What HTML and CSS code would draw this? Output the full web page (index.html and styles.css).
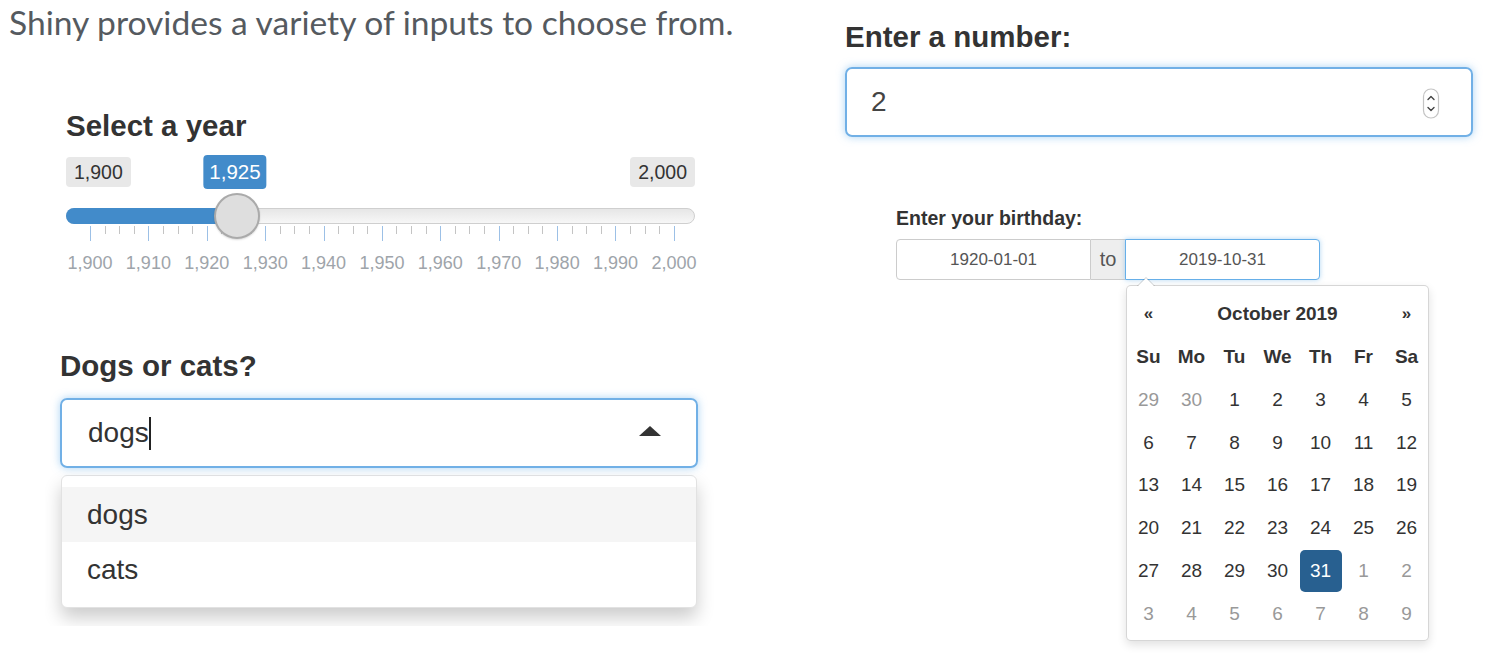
FILE: index.html
```html
<!DOCTYPE html>
<html lang="en">
<head>
<meta charset="utf-8">
<title>Shiny inputs</title>
<link rel="stylesheet" href="styles.css">
</head>
<body>
<div class="page">
  <div class="left">
    <p class="intro">Shiny provides a variety of inputs to choose from.</p>

    <div class="slider-group">
      <div class="ctl-label">Select a year</div>
      <div class="slider">
        <div class="slider-labels">
          <span class="lbl-minmax">1,900</span>
          <span class="lbl-single" style="left: 169px">1,925</span>
          <span class="lbl-minmax">2,000</span>
        </div>
        <div class="track">
          <div class="track-fill" style="width: 170px"></div>
          <div class="handle" style="left: 147px"></div>
        </div>
        <div class="ticks">
          <i class="major"></i><i></i><i></i><i></i>
          <i class="major"></i><i></i><i></i><i></i>
          <i class="major"></i><i></i><i></i><i></i>
          <i class="major"></i><i></i><i></i><i></i>
          <i class="major"></i><i></i><i></i><i></i>
          <i class="major"></i><i></i><i></i><i></i>
          <i class="major"></i><i></i><i></i><i></i>
          <i class="major"></i><i></i><i></i><i></i>
          <i class="major"></i><i></i><i></i><i></i>
          <i class="major"></i><i></i><i></i><i></i>
          <i class="major"></i>
        </div>
        <div class="grid-labels">
          <span>1,900</span><span>1,910</span><span>1,920</span><span>1,930</span>
          <span>1,940</span><span>1,950</span><span>1,960</span><span>1,970</span>
          <span>1,980</span><span>1,990</span><span>2,000</span>
        </div>
      </div>
    </div>

    <div class="select-clip">
      <div class="ctl-label">Dogs or cats?</div>
      <div class="select-box">
        <span class="select-text">dogs</span><span class="caret"></span>
        <span class="select-arrow"></span>
      </div>
      <div class="select-menu">
        <div class="option active">dogs</div>
        <div class="option">cats</div>
      </div>
    </div>
  </div>

  <div class="right">
    <div class="ctl-label">Enter a number:</div>
    <div class="num-box">
      <span class="num-text">2</span>
      <svg class="spinner" width="18" height="31" viewBox="0 0 18 31">
        <rect x="1.5" y="1" width="15" height="29" rx="7.5" fill="#fff" stroke="#c4c4c4" stroke-width="1.2"/>
        <path d="M6 11.5 L9 8.5 L12 11.5" fill="none" stroke="#444" stroke-width="1.4" stroke-linecap="round" stroke-linejoin="round"/>
        <path d="M6 19.5 L9 22.5 L12 19.5" fill="none" stroke="#444" stroke-width="1.4" stroke-linecap="round" stroke-linejoin="round"/>
      </svg>
    </div>

    <div class="bday-group">
      <div class="bday-label">Enter your birthday:</div>
      <div class="date-range">
        <div class="date-input first">1920-01-01</div>
        <div class="date-addon">to</div>
        <div class="date-input focused">2019-10-31</div>
      </div>
      <div class="datepicker">
        <div class="dp-grid">
          <span class="dp-nav">«</span><span class="dp-title">October 2019</span><span class="dp-nav">»</span>
          <span class="dow">Su</span><span class="dow">Mo</span><span class="dow">Tu</span><span class="dow">We</span><span class="dow">Th</span><span class="dow">Fr</span><span class="dow">Sa</span>
          <span class="day old">29</span><span class="day old">30</span><span class="day">1</span><span class="day">2</span><span class="day">3</span><span class="day">4</span><span class="day">5</span>
          <span class="day">6</span><span class="day">7</span><span class="day">8</span><span class="day">9</span><span class="day">10</span><span class="day">11</span><span class="day">12</span>
          <span class="day">13</span><span class="day">14</span><span class="day">15</span><span class="day">16</span><span class="day">17</span><span class="day">18</span><span class="day">19</span>
          <span class="day">20</span><span class="day">21</span><span class="day">22</span><span class="day">23</span><span class="day">24</span><span class="day">25</span><span class="day">26</span>
          <span class="day">27</span><span class="day">28</span><span class="day">29</span><span class="day">30</span><span class="day"><b class="selected">31</b></span><span class="day old">1</span><span class="day old">2</span>
          <span class="day old">3</span><span class="day old">4</span><span class="day old">5</span><span class="day old">6</span><span class="day old">7</span><span class="day old">8</span><span class="day old">9</span>
        </div>
      </div>
    </div>
  </div>
</div>
</body>
</html>
```

FILE: styles.css
```css
* { box-sizing: border-box; }

html, body {
  margin: 0;
  padding: 0;
  background: #fff;
}

body {
  font-family: "Liberation Sans", Arial, Helvetica, sans-serif;
  color: #333;
}

.page {
  display: flex;
  width: 1502px;
  height: 654px;
  overflow: hidden;
}

.left {
  width: 845px;
  flex: none;
  display: flex;
  flex-direction: column;
}

.intro {
  margin: 0;
  padding-left: 9px;
  font-family: Lato, "Open Sans", sans-serif;
  font-size: 33.6px;
  line-height: 44px;
  color: #555a5f;
  height: 44px;
}

.ctl-label {
  font-weight: bold;
  font-size: 29.5px;
  line-height: 34px;
  color: #333;
}

/* ---------- slider ---------- */
.slider-group {
  margin-top: 65px;
  margin-left: 66px;
  width: 632px;
}

.slider {
  margin-top: 12px;
}

.slider-labels {
  position: relative;
  display: flex;
  justify-content: space-between;
  align-items: center;
  height: 34px;
  margin-right: 3px;
}

.lbl-minmax {
  background: #e8e8e8;
  color: #333;
  font-size: 19.5px;
  line-height: 30px;
  padding: 0 8px;
  border-radius: 4px;
}

.lbl-single {
  position: absolute;
  top: 0;
  transform: translateX(-50%);
  background: #428bca;
  color: #fff;
  font-size: 20.5px;
  line-height: 34px;
  padding: 0 6px;
  border-radius: 4px;
}

.track {
  position: relative;
  margin-top: 19px;
  height: 16px;
  margin-right: 3px;
  border: 1px solid #cfcfcf;
  border-radius: 8px;
  background: linear-gradient(#dedede -50%, #fff 150%);
}

.track-fill {
  position: absolute;
  left: -1px;
  top: -1px;
  bottom: -1px;
  background: #428bca;
  border-radius: 8px 0 0 8px;
}

.handle {
  position: absolute;
  z-index: 2;
  top: -16px;
  width: 46px;
  height: 46px;
  border-radius: 50%;
  background: #dedede;
  border: 2px solid #aaa;
  box-shadow: 0 1px 2px rgba(0,0,0,0.15);
}

.ticks {
  display: flex;
  justify-content: space-between;
  align-items: flex-start;
  height: 15px;
  margin-top: 2px;
  padding: 0 23px 0 24px;
}

.ticks i {
  display: block;
  width: 1px;
  height: 8px;
  background: #c4c4c4;
}

.ticks i.major {
  height: 15px;
  background: #9cc0e6;
}

.grid-labels {
  display: flex;
  justify-content: space-between;
  margin-top: 11px;
  font-size: 18px;
  line-height: 22px;
  color: #9ea4aa;
}

.grid-labels span {
  width: 48px;
  text-align: center;
}

/* ---------- select ---------- */
.select-clip {
  margin-top: 75px;
  margin-left: 45px;
  width: 670px;
  padding: 0 0 18px 15px;
  overflow: hidden;
}

.select-box {
  position: relative;
  display: flex;
  align-items: center;
  margin-top: 15px;
  width: 638px;
  height: 70px;
  padding-left: 26px;
  border: 2px solid #71b0e6;
  border-radius: 7px;
  box-shadow: 0 0 8px rgba(102,175,233,0.55);
  font-size: 28px;
  color: #333;
}

.caret {
  display: inline-block;
  width: 2px;
  height: 33px;
  background: #222;
  margin-left: 0;
}

.select-arrow {
  position: absolute;
  right: 35px;
  top: 26px;
  width: 0;
  height: 0;
  border-left: 11px solid transparent;
  border-right: 11px solid transparent;
  border-bottom: 10px solid #333;
}

.select-menu {
  margin-top: 7px;
  margin-left: 1px;
  width: 636px;
  padding: 11px 0 10px;
  border: 1px solid #e2e2e2;
  border-radius: 6px;
  background: #fff;
  box-shadow: 0 10px 18px rgba(0,0,0,0.2);
}

.option {
  height: 55px;
  line-height: 55px;
  padding-left: 25px;
  font-size: 28px;
  color: #333;
}

.option.active {
  background: #f5f5f5;
}

/* ---------- right column ---------- */
.right {
  flex: none;
  padding-top: 20px;
  display: flex;
  flex-direction: column;
}

.num-box {
  margin-top: 13px;
  width: 628px;
  height: 70px;
  display: flex;
  align-items: center;
  justify-content: space-between;
  padding: 0 31px 0 24px;
  border: 2px solid #71b0e6;
  border-radius: 7px;
  box-shadow: 0 0 8px rgba(102,175,233,0.55);
  font-size: 28px;
  color: #444;
}

.spinner {
  display: block;
  margin-top: 2px;
}

.bday-group {
  margin-top: 69px;
  margin-left: 51px;
}

.bday-label {
  font-weight: bold;
  font-size: 19.5px;
  line-height: 24px;
  color: #333;
}

.date-range {
  display: flex;
  margin-top: 9px;
  height: 41px;
}

.date-input {
  width: 195px;
  height: 41px;
  border: 1px solid #ccc;
  display: flex;
  align-items: center;
  justify-content: center;
  font-size: 17px;
  color: #555;
  background: #fff;
}

.date-input.first {
  border-radius: 4px 0 0 4px;
}

.date-input.focused {
  border: 1.5px solid #66afe9;
  border-radius: 0 4px 4px 0;
  box-shadow: 0 0 5px rgba(102,175,233,0.5);
}

.date-addon {
  width: 34px;
  display: flex;
  align-items: center;
  justify-content: center;
  background: #eee;
  border-top: 1px solid #ccc;
  border-bottom: 1px solid #ccc;
  font-size: 20px;
  color: #555;
}

.datepicker {
  position: relative;
  margin-top: 5px;
  margin-left: 230px;
  width: 303px;
  height: 356px;
  padding: 7px 0 5px;
  border: 1px solid rgba(0,0,0,0.16);
  border-radius: 5px;
  background: #fff;
  box-shadow: 0 4px 10px rgba(0,0,0,0.12);
}

.datepicker::before {
  content: "";
  position: absolute;
  top: -9px;
  left: 10px;
  border-left: 9px solid transparent;
  border-right: 9px solid transparent;
  border-bottom: 9px solid rgba(0,0,0,0.18);
}

.datepicker::after {
  content: "";
  position: absolute;
  top: -8px;
  left: 11px;
  border-left: 8px solid transparent;
  border-right: 8px solid transparent;
  border-bottom: 8px solid #fff;
}

.dp-grid {
  display: grid;
  grid-template-columns: repeat(7, 43px);
  grid-template-rows: repeat(8, 42.75px);
}

.dp-grid > span {
  display: flex;
  align-items: center;
  justify-content: center;
  font-size: 19px;
}

.dp-nav {
  font-weight: bold;
  font-size: 17px !important;
}

.dp-title {
  grid-column: span 5;
  font-weight: bold;
}

.dow {
  font-weight: bold;
}

.day {
  color: #333;
}

.day.old {
  color: #999;
}

.selected {
  display: flex;
  align-items: center;
  justify-content: center;
  width: 42px;
  height: 42px;
  border-radius: 5px;
  background: #286090;
  color: #fff;
  font-weight: normal;
}
```
